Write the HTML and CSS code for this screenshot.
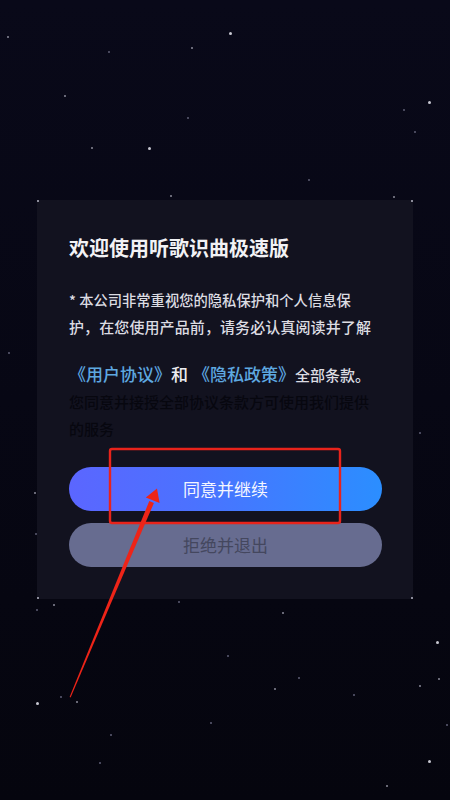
FILE: index.html
```html
<!DOCTYPE html>
<html lang="zh-CN">
<head>
<meta charset="utf-8">
<title>欢迎使用听歌识曲极速版</title>
<link rel="stylesheet" href="styles.css">
</head>
<body>
<div class="screen">
  <div class="stars">
    <i class="s" style="left:7px;top:36px"></i>
    <i class="s d" style="left:108px;top:51px"></i>
    <i class="s" style="left:191px;top:47px"></i>
    <i class="s b" style="left:229px;top:32px"></i>
    <i class="s" style="left:64px;top:95px"></i>
    <i class="s d" style="left:187px;top:117px"></i>
    <i class="s b" style="left:428px;top:101px"></i>
    <i class="s d" style="left:403px;top:109px"></i>
    <i class="s d" style="left:414px;top:131px"></i>
    <i class="s" style="left:91px;top:147px"></i>
    <i class="s b" style="left:148px;top:147px"></i>
    <i class="s d" style="left:308px;top:179px"></i>
    <i class="s" style="left:170px;top:195px"></i>
    <i class="s" style="left:393px;top:196px"></i>
    <i class="s" style="left:34px;top:492px"></i>
    <i class="s d" style="left:35px;top:533px"></i>
    <i class="s d" style="left:419px;top:432px"></i>
    <i class="s d" style="left:8px;top:352px"></i>
    <i class="s" style="left:53px;top:604px"></i>
    <i class="s d" style="left:36px;top:609px"></i>
    <i class="s d" style="left:178px;top:601px"></i>
    <i class="s" style="left:282px;top:612px"></i>
    <i class="s b" style="left:436px;top:641px"></i>
    <i class="s d" style="left:227px;top:655px"></i>
    <i class="s d" style="left:298px;top:677px"></i>
    <i class="s" style="left:438px;top:678px"></i>
    <i class="s" style="left:274px;top:688px"></i>
    <i class="s d" style="left:353px;top:694px"></i>
    <i class="s" style="left:419px;top:685px"></i>
    <i class="s b" style="left:36px;top:702px"></i>
    <i class="s d" style="left:60px;top:696px"></i>
    <i class="s" style="left:76px;top:701px"></i>
    <i class="s d" style="left:210px;top:722px"></i>
    <i class="s d" style="left:446px;top:724px"></i>
    <i class="s d" style="left:110px;top:734px"></i>
    <i class="s d" style="left:99px;top:762px"></i>
    <i class="s b" style="left:428px;top:760px"></i>
    <i class="s" style="left:386px;top:785px"></i>
  </div>

  <div class="card">
    <span class="corner tl"></span><span class="corner tr"></span>
    <span class="corner bl"></span><span class="corner br"></span>
    <h1 class="title">欢迎使用听歌识曲极速版</h1>
    <div class="body">
      <p class="line first">* 本公司非常重视您的隐私保护和个人信息保</p>
      <p class="line second">护，在您使用产品前，请务必认真阅读并了解</p>
      <p class="line links"><a class="link">《用户协议》</a><span class="and">和</span><a class="link">《隐私政策》</a><span class="rest">全部条款。</span></p>
      <p class="line hidden">您同意并接授全部协议条款方可使用我们提供</p>
      <p class="line hidden">的服务</p>
    </div>
    <div class="actions">
      <button class="btn agree">同意并继续</button>
      <button class="btn refuse">拒绝并退出</button>
    </div>
  </div>

  <svg class="annot" width="450" height="800" viewBox="0 0 450 800">
    <rect x="110" y="449" width="230" height="74" rx="2" fill="none" stroke="#e8231b" stroke-width="2.4"/>
    <polygon points="153.9,503.0 149.3,501.0 69.6,697 70.6,697.4" fill="#ee2418"/>
    <polygon points="157,488.5 159.6,503 145.8,497.4" fill="#ee2418"/>
  </svg>
</div>
</body>
</html>
```

FILE: styles.css
```css
* { box-sizing: border-box; }
html, body {
  margin: 0;
  padding: 0;
}
body {
  width: 450px;
  height: 800px;
  overflow: hidden;
  font-family: "Noto Sans CJK SC", "Noto Sans", sans-serif;
  background: #07071a;
}
.screen {
  position: relative;
  width: 450px;
  height: 800px;
  padding-top: 200px;
  background: linear-gradient(180deg, #090919 0%, #070714 50%, #05050e 100%);
}
.stars {
  position: absolute;
  inset: 0;
}
.s {
  position: absolute;
  width: 2px;
  height: 2px;
  border-radius: 50%;
  background: #8a8a98;
}
.s.d {
  width: 1.5px;
  height: 1.5px;
  background: #55556a;
}
.s.b {
  width: 3px;
  height: 3px;
  background: #c8c8d2;
}
.card {
  position: relative;
  margin-left: 37px;
  width: 376px;
  height: 399px;
  background: #12121f;
  padding: 34px 31px 32px 32px;
  display: flex;
  flex-direction: column;
}
.corner {
  position: absolute;
  width: 2px;
  height: 2px;
  background: #8c8c9a;
}
.corner.tl { left: 0; top: 0; }
.corner.tr { right: 0; top: 0; }
.corner.bl { left: 0; bottom: 0; }
.corner.br { right: 0; bottom: 0; }
.title {
  margin: 0;
  font-size: 20px;
  line-height: 28px;
  font-weight: 700;
  color: #f2f2f5;
  white-space: nowrap;
}
.body {
  margin-top: 24px;
}
.line {
  margin: 0;
  font-size: 15px;
  line-height: 27px;
  color: #dcdce2;
  font-weight: 500;
  white-space: nowrap;
}
.line.first {
  font-size: 14.3px;
}
.line.second {
  letter-spacing: 0.1px;
}
.line.links {
  margin-top: 21px;
  line-height: 26px;
}
.link {
  font-size: 17px;
  color: #5ea8e0;
}
.and {
  font-size: 17px;
  color: #ececf0;
  margin-right: 5px;
}
.rest {
  font-size: 15px;
  color: #dcdce2;
}
.line.hidden {
  color: #07070f;
}
.actions {
  margin-top: 25px;
  display: flex;
  flex-direction: column;
  gap: 12px;
}
.btn {
  width: 313px;
  height: 44px;
  border: none;
  border-radius: 22px;
  font-family: "Noto Sans CJK SC", "Noto Sans", sans-serif;
  font-size: 17px;
  font-weight: 400;
  padding: 0;
  line-height: 44px;
}
.agree {
  background: linear-gradient(90deg, #5b66ff 0%, #4b72ff 40%, #2b8eff 100%);
  color: #f4f6ff;
}
.refuse {
  background: #676c90;
  color: #44475e;
}
.annot {
  position: absolute;
  left: 0;
  top: 0;
  pointer-events: none;
}
```
